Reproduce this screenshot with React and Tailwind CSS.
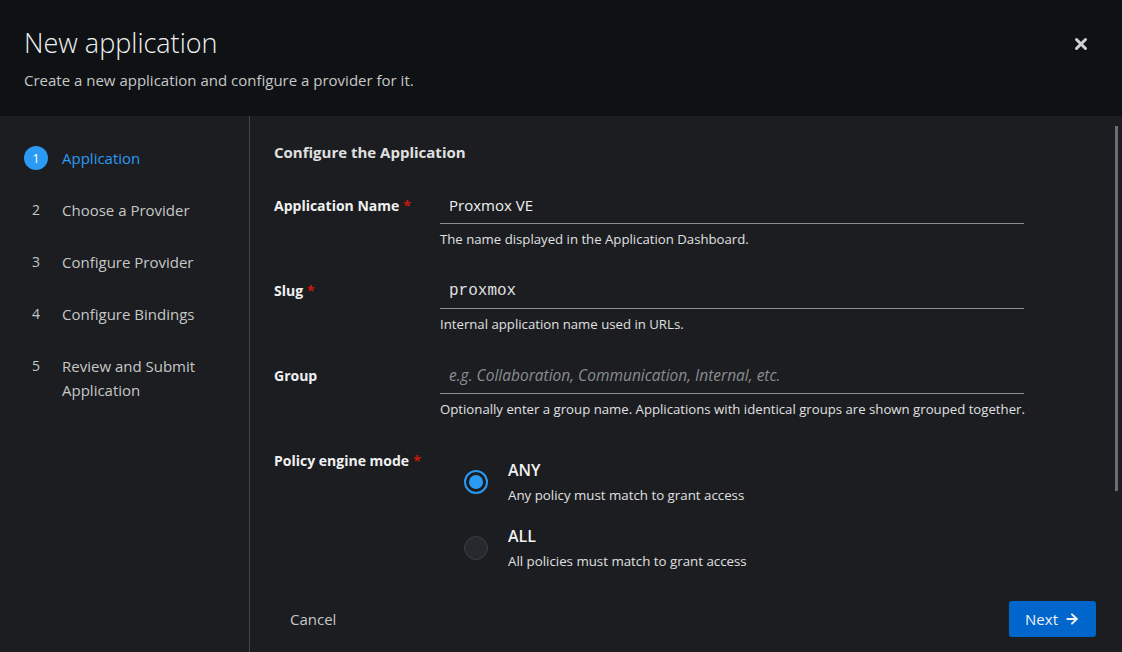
import { X, ArrowRight } from 'lucide-react';

const steps = [
  { n: 1, label: 'Application', active: true },
  { n: 2, label: 'Choose a Provider' },
  { n: 3, label: 'Configure Provider' },
  { n: 4, label: 'Configure Bindings' },
  { n: 5, label: 'Review and Submit Application' },
];

function Field({ label, required, children, help }) {
  return (
    <div className="flex">
      <div className="w-[166px] shrink-0 pt-[8px] text-[14px] font-bold leading-[20px] text-[#f0f0f0]">
        {label}
        {required && <span className="ml-1 text-[#c9190b]">*</span>}
      </div>
      <div className="w-[584px]">
        {children}
        {help && (
          <div className="mt-[5px] whitespace-nowrap text-[13.2px] leading-[20px] text-[#e0e0e0]">{help}</div>
        )}
      </div>
    </div>
  );
}

function Input({ children, className = '', style }) {
  return (
    <div
      className={`flex h-[36px] items-center border-b border-[#8a8d90] px-[9px] ${className}`}
      style={style}
    >
      {children}
    </div>
  );
}

function Radio({ checked, title, desc }) {
  return (
    <div className="flex items-center">
      <div className="w-[68px] pl-[24px]">
        {checked ? (
          <div className="flex h-[24px] w-[24px] items-center justify-center rounded-full border-2 border-[#2b9af3] bg-[#1b1d21]">
            <div className="h-[14px] w-[14px] rounded-full bg-[#2b9af3]" />
          </div>
        ) : (
          <div className="h-[24px] w-[24px] rounded-full border border-[#3c3f42] bg-[#26292d]" />
        )}
      </div>
      <div>
        <div className="text-[16px] font-semibold leading-[24px] text-[#f0f0f0]">{title}</div>
        <div className="mt-[3px] text-[13.3px] leading-[20px] text-[#e0e0e0]">{desc}</div>
      </div>
    </div>
  );
}

export default function App() {
  return (
    <div
      className="flex h-[652px] w-[1122px] flex-col overflow-hidden bg-[#1b1d21]"
      style={{ fontFamily: '"Open Sans", "Noto Sans", sans-serif' }}
    >
      {/* Header */}
      <header className="flex h-[116px] shrink-0 items-start justify-between bg-[#0f1214] px-6 pt-[26px]">
        <div>
          <h1 className="text-[27px] font-light leading-[34px] text-[#f0f0f0]">New application</h1>
          <p className="mt-[9px] text-[15px] text-[#c7c7c7]">
            Create a new application and configure a provider for it.
          </p>
        </div>
        <button className="mr-[8px] mt-[9px] text-[#d2d2d2]">
          <X size={18} strokeWidth={4} />
        </button>
      </header>

      <div className="flex min-h-0 flex-1">
        {/* Steps */}
        <nav className="w-[250px] shrink-0 border-r border-[#444548] pl-6 pt-[30px]">
          <ul className="space-y-[28px]">
            {steps.map((s) => (
              <li key={s.n} className="flex items-start text-[15px] leading-[24px]">
                {s.active ? (
                  <span className="flex h-[24px] w-[24px] shrink-0 items-center justify-center rounded-full bg-[#2b9af3] text-[13px] text-white">
                    {s.n}
                  </span>
                ) : (
                  <span className="flex h-[24px] w-[24px] shrink-0 items-center justify-center text-[14px] text-[#c7c7c7]">
                    {s.n}
                  </span>
                )}
                <span className={`ml-[14px] w-[150px] ${s.active ? 'text-[#2b9af3]' : 'text-[#c7c7c7]'}`}>
                  {s.label}
                </span>
              </li>
            ))}
          </ul>
        </nav>

        {/* Main */}
        <main className="relative flex min-w-0 flex-1 flex-col">
          <div className="flex-1 pl-6 pt-[25px]">
            <h2 className="text-[15px] font-bold leading-[22px] text-[#e0e0e0]">Configure the Application</h2>
            <div className="mt-[25px] space-y-[24px]">
              <Field label="Application Name" required help="The name displayed in the Application Dashboard.">
                <Input className="text-[15px] text-[#f0f0f0]">Proxmox VE</Input>
              </Field>
              <Field label="Slug" required help="Internal application name used in URLs.">
                <Input className="text-[16px] text-[#e0e0e0]" style={{ fontFamily: '"Liberation Mono", monospace' }}>
                  proxmox
                </Input>
              </Field>
              <Field
                label="Group"
                help="Optionally enter a group name. Applications with identical groups are shown grouped together."
              >
                <Input className="text-[15.5px] italic text-[#8a8d90]">
                  e.g. Collaboration, Communication, Internal, etc.
                </Input>
              </Field>
              <Field label="Policy engine mode" required>
                <div className="space-y-[19px] pt-[15px]">
                  <Radio checked title="ANY" desc="Any policy must match to grant access" />
                  <Radio title="ALL" desc="All policies must match to grant access" />
                </div>
              </Field>
            </div>
          </div>

          <footer className="flex items-center justify-between pb-[15px] pl-10 pr-[26px]">
            <button className="text-[15px] text-[#c7c7c7]">Cancel</button>
            <button className="flex h-[36px] items-center gap-[6px] rounded-[3px] bg-[#0066cc] px-[16px] text-[15px] text-[#f0f0f0]">
              Next <ArrowRight size={16} strokeWidth={3} />
            </button>
          </footer>

          {/* scrollbar */}
          <div className="absolute right-[4px] top-[10px] h-[365px] w-[3px] bg-[#6a6e73]" />
        </main>
      </div>
    </div>
  );
}
